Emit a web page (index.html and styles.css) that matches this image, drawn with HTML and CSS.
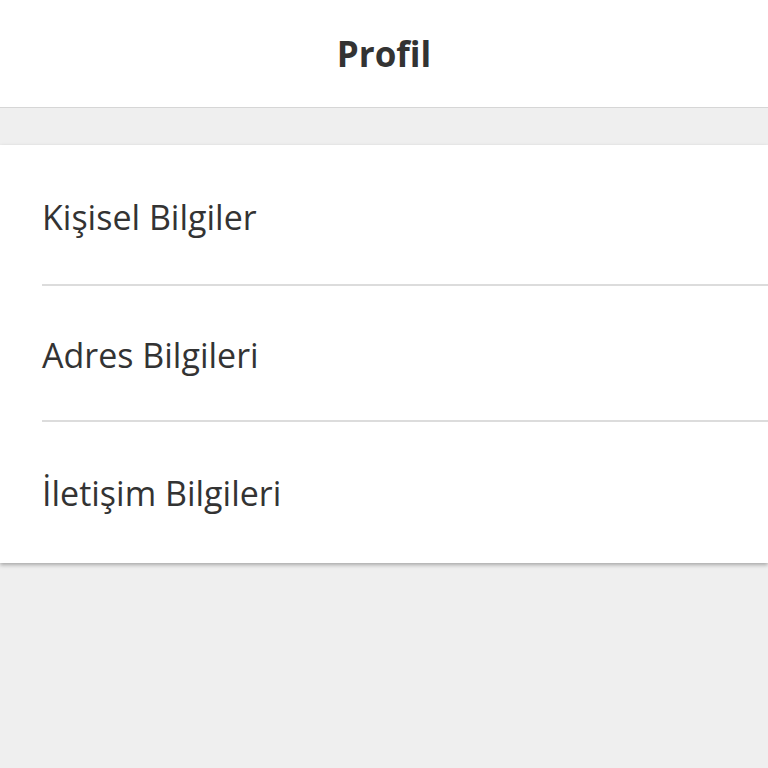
FILE: index.html
```html
<html>
  <head>
    <title>Profil</title>
    <link rel="stylesheet" href="styles.css">
  </head>
  <body>
    <div class="header">Profil</div>
    <div class="spacer"></div>
    <div class="menu">
      <div class="item first"><span>Kişisel Bilgiler</span></div>
      <div class="item"><span>Adres Bilgileri</span></div>
      <div class="item last"><span>İletişim Bilgileri</span></div>
    </div>
  </body>
</html>
```

FILE: styles.css
```css
body {
  margin: 0;
  background-color: #efefef;
  font-family: "Open Sans", "DejaVu Sans", sans-serif;
  color: #333;
}

.header {
  height: 107px;
  background-color: #fff;
  border-bottom: 1px solid #d6d6d6;
  display: flex;
  align-items: center;
  justify-content: center;
  font-size: 35px;
  font-weight: 700;
  color: #333;
}

.spacer {
  height: 37px;
}

.menu {
  background-color: #fff;
  padding-left: 42px;
  box-shadow: 0 2px 4px rgba(0, 0, 0, 0.3);
}

.item {
  height: 136px;
  padding-top: 4px;
  box-sizing: border-box;
  display: flex;
  align-items: center;
  border-bottom: 2px solid #dcdcdc;
  font-size: 34px;
}

.item.first {
  height: 141px;
}

.item.last {
  height: 141px;
  padding-top: 0;
  border-bottom: none;
}
```
